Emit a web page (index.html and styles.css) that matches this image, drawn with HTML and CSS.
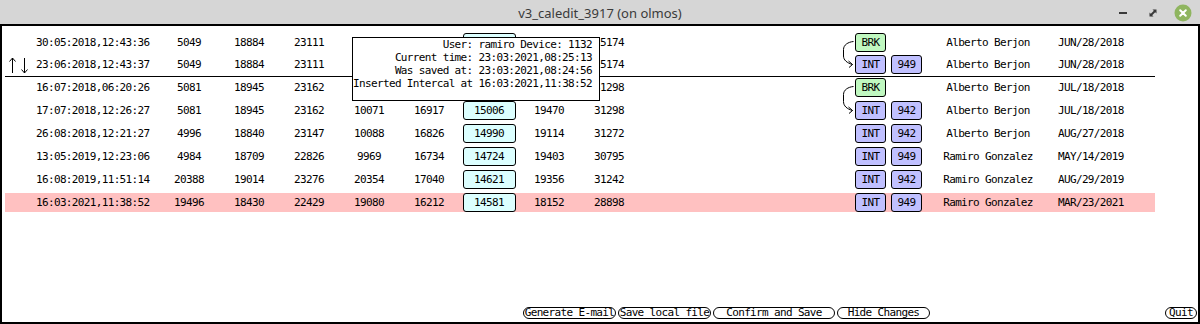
FILE: index.html
```html
<!DOCTYPE html>
<html>
<head>
<meta charset="utf-8">
<title>v3_caledit_3917 (on olmos)</title>
<link rel="stylesheet" href="styles.css">
</head>
<body>
<div class="titlebar">
  <div class="title">v3_caledit_3917 (on olmos)</div>
  <div class="controls">
    <svg class="ctl" width="24" height="24" viewBox="0 0 24 24"><rect x="8" y="11" width="8" height="2" fill="#3a3a3a"/></svg>
    <svg class="ctl" width="24" height="24" viewBox="0 0 24 24"><path d="M11.5 8.5 H15.5 V12.5 Z M8.5 11.5 V15.5 H12.5 Z" fill="#3a3a3a"/><path d="M9.5 14.5 L14.5 9.5" stroke="#3a3a3a" stroke-width="2"/></svg>
    <svg class="ctl" width="24" height="24" viewBox="0 0 24 24"><circle cx="12" cy="12" r="8.5" fill="#8fb55f"/><path d="M9.2 9.2 L14.8 14.8 M14.8 9.2 L9.2 14.8" stroke="#fff" stroke-width="2" stroke-linecap="round"/></svg>
  </div>
</div>
<div class="window">
  <div class="table">
    <div class="group top">
      <div class="row">
        <div class="arrows"></div>
        <div class="date">30:05:2018,12:43:36</div>
        <div class="num">5049</div><div class="num">18884</div><div class="num">23111</div><div class="num">10091</div><div class="num">16927</div>
        <div class="num"><span class="box">15151</span></div>
        <div class="num">19771</div><div class="num">35174</div>
        <div class="tags">
          <svg class="curve" width="16" height="30" viewBox="0 0 16 30"><path d="M13.5 1.5 C8 2, 3.5 5, 3.5 9.5 L3.5 16 C3.5 20, 7 23, 12.5 24.5 M8.5 21 L12.5 24.5 L9 27.5" fill="none" stroke="#000" stroke-width="1"/></svg>
          <span class="tag brk">BRK</span>
        </div>
        <div class="name">Alberto Berjon</div>
        <div class="when">JUN/28/2018</div>
      </div>
      <div class="row">
        <div class="arrows"><svg width="22" height="17" viewBox="0 0 22 17"><path d="M3.5 1 V16 M0.5 4.5 L3.5 1 L6.5 4.5 M15.5 1 V16 M12.5 12.5 L15.5 16 L18.5 12.5" fill="none" stroke="#000" stroke-width="1"/></svg></div>
        <div class="date">23:06:2018,12:43:37</div>
        <div class="num">5049</div><div class="num">18884</div><div class="num">23111</div><div class="num">10091</div><div class="num">16927</div>
        <div class="num"><span class="box">15151</span></div>
        <div class="num">19771</div><div class="num">35174</div>
        <div class="tags"><span class="tag int">INT</span><span class="tag int">949</span></div>
        <div class="name">Alberto Berjon</div>
        <div class="when">JUN/28/2018</div>
      </div>
    </div>
    <div class="sep"></div>
    <div class="group bottom">
      <div class="row">
        <div class="arrows"></div>
        <div class="date">16:07:2018,06:20:26</div>
        <div class="num">5081</div><div class="num">18945</div><div class="num">23162</div><div class="num">10071</div><div class="num">16917</div>
        <div class="num"><span class="box">15006</span></div>
        <div class="num">19470</div><div class="num">31298</div>
        <div class="tags">
          <svg class="curve" width="16" height="30" viewBox="0 0 16 30"><path d="M13.5 1.5 C8 2, 3.5 5, 3.5 9.5 L3.5 16.5 C3.5 21, 7 24, 12.5 25.5 M8.5 22 L12.5 25.5 L9 28.5" fill="none" stroke="#000" stroke-width="1"/></svg>
          <span class="tag brk">BRK</span>
        </div>
        <div class="name">Alberto Berjon</div>
        <div class="when">JUL/18/2018</div>
      </div>
      <div class="row">
        <div class="arrows"></div>
        <div class="date">17:07:2018,12:26:27</div>
        <div class="num">5081</div><div class="num">18945</div><div class="num">23162</div><div class="num">10071</div><div class="num">16917</div>
        <div class="num"><span class="box">15006</span></div>
        <div class="num">19470</div><div class="num">31298</div>
        <div class="tags"><span class="tag int">INT</span><span class="tag int">942</span></div>
        <div class="name">Alberto Berjon</div>
        <div class="when">JUL/18/2018</div>
      </div>
      <div class="row">
        <div class="arrows"></div>
        <div class="date">26:08:2018,12:21:27</div>
        <div class="num">4996</div><div class="num">18840</div><div class="num">23147</div><div class="num">10088</div><div class="num">16826</div>
        <div class="num"><span class="box">14990</span></div>
        <div class="num">19114</div><div class="num">31272</div>
        <div class="tags"><span class="tag int">INT</span><span class="tag int">942</span></div>
        <div class="name">Alberto Berjon</div>
        <div class="when">AUG/27/2018</div>
      </div>
      <div class="row">
        <div class="arrows"></div>
        <div class="date">13:05:2019,12:23:06</div>
        <div class="num">4984</div><div class="num">18709</div><div class="num">22826</div><div class="num">9969</div><div class="num">16734</div>
        <div class="num"><span class="box">14724</span></div>
        <div class="num">19403</div><div class="num">30795</div>
        <div class="tags"><span class="tag int">INT</span><span class="tag int">949</span></div>
        <div class="name">Ramiro Gonzalez</div>
        <div class="when">MAY/14/2019</div>
      </div>
      <div class="row">
        <div class="arrows"></div>
        <div class="date">16:08:2019,11:51:14</div>
        <div class="num">20388</div><div class="num">19014</div><div class="num">23276</div><div class="num">20354</div><div class="num">17040</div>
        <div class="num"><span class="box">14621</span></div>
        <div class="num">19356</div><div class="num">31242</div>
        <div class="tags"><span class="tag int">INT</span><span class="tag int">942</span></div>
        <div class="name">Ramiro Gonzalez</div>
        <div class="when">AUG/29/2019</div>
      </div>
      <div class="row current">
        <div class="arrows"></div>
        <div class="date">16:03:2021,11:38:52</div>
        <div class="num">19496</div><div class="num">18430</div><div class="num">22429</div><div class="num">19080</div><div class="num">16212</div>
        <div class="num"><span class="box">14581</span></div>
        <div class="num">18152</div><div class="num">28898</div>
        <div class="tags"><span class="tag int">INT</span><span class="tag int">949</span></div>
        <div class="name">Ramiro Gonzalez</div>
        <div class="when">MAR/23/2021</div>
      </div>
    </div>
  </div>
  <div class="tooltip">
    <div>User: ramiro Device: 1132</div>
    <div>Current time: 23:03:2021,08:25:13</div>
    <div>Was saved at: 23:03:2021,08:24:56</div>
    <div>Inserted Intercal at 16:03:2021,11:38:52</div>
  </div>
  <div class="footer">
    <div class="btngroup">
      <button class="btn w-gen">Generate E-mail</button>
      <button class="btn w-save">Save local file</button>
      <button class="btn w-confirm">Confirm and Save</button>
      <button class="btn w-hide">Hide Changes</button>
    </div>
    <button class="btn w-quit">Quit</button>
  </div>
</div>
</body>
</html>
```
FILE: styles.css
```css
* { box-sizing: border-box; }
html, body { margin: 0; padding: 0; }
body {
  width: 1200px;
  height: 324px;
  overflow: hidden;
  background: #ffffff;
  font-family: "DejaVu Sans Mono", "Liberation Mono", monospace;
  font-size: 11px;
  letter-spacing: -0.65px;
  color: #000;
}

.titlebar {
  height: 24px;
  background: #d6d6d6;
  display: grid;
  grid-template-columns: 1fr auto 1fr;
  align-items: center;
}
.title {
  grid-column: 2;
  font-family: "Noto Sans", "Open Sans", sans-serif;
  font-size: 13px;
  letter-spacing: 0;
  color: #3a3a3a;
  line-height: 24px;
  padding-top: 1px;
}
.controls {
  grid-column: 3;
  justify-self: end;
  display: flex;
  gap: 6px;
  padding-right: 5px;
  height: 24px;
  align-items: center;
}
.ctl { display: block; }

.window {
  position: relative;
  height: 300px;
  border: 2px solid #000;
  display: flex;
  flex-direction: column;
}

.table {
  padding: 7px 0 0 3px;
  width: 1153px;
}
.group { display: flex; flex-direction: column; }
.group.top { gap: 3px; }
.group.bottom { gap: 4px; }
.sep {
  height: 1px;
  background: #000;
  margin: 2px 0 1px 0;
  width: 1150px;
}

.row {
  display: grid;
  grid-template-columns: 26px 128px repeat(8, 60px) 216px 67px 132px 101px;
  height: 19px;
  line-height: 19px;
  width: 1150px;
  white-space: nowrap;
}
.row.current { background: #ffc1c1; }

.arrows {
  display: flex;
  align-items: center;
  padding-left: 4px;
}
.arrows svg { display: block; margin-top: 2px; }
.date { padding-left: 5px; }
.num { text-align: center; }
.box {
  display: block;
  width: 53px;
  height: 19px;
  margin: 0 auto;
  border: 1px solid #000;
  border-radius: 3px;
  background: #dcffff;
  line-height: 17px;
  text-align: center;
}

.tags {
  grid-column: 12;
  position: relative;
  display: flex;
  gap: 5px;
}
.tag {
  display: block;
  width: 31px;
  height: 19px;
  border: 1px solid #000;
  border-radius: 3px;
  line-height: 17px;
  text-align: center;
}
.tag.int { background: #c0c0ff; }
.tag.brk { background: #c0f8c0; }
.curve {
  position: absolute;
  left: -15px;
  top: 7px;
  overflow: visible;
}
.name { text-align: center; }
.when { padding-left: 4px; }

.tooltip {
  position: absolute;
  left: 350px;
  top: 11px;
  width: 248px;
  height: 64px;
  border: 1px solid #000;
  background: #fff;
  text-align: right;
  padding-right: 7px;
  line-height: 13px;
  white-space: nowrap;
}

.footer {
  margin-top: auto;
  margin-bottom: 3px;
  display: flex;
  align-items: center;
  padding-right: 1px;
}
.btngroup {
  display: flex;
  gap: 2px;
  margin-left: 521px;
}
.btn {
  font-family: "DejaVu Sans Mono", "Liberation Mono", monospace;
  font-size: 11px;
  letter-spacing: -0.65px;
  color: #000;
  height: 12px;
  line-height: 10px;
  padding: 0;
  margin: 0;
  border: 1px solid #000;
  border-radius: 6px;
  background: #fff;
  text-align: center;
  white-space: nowrap;
  overflow: hidden;
}
.w-gen { width: 93px; }
.w-save { width: 93px; }
.w-confirm { width: 122px; }
.w-hide { width: 93px; }
.w-quit { width: 32px; margin-left: auto; }
```
